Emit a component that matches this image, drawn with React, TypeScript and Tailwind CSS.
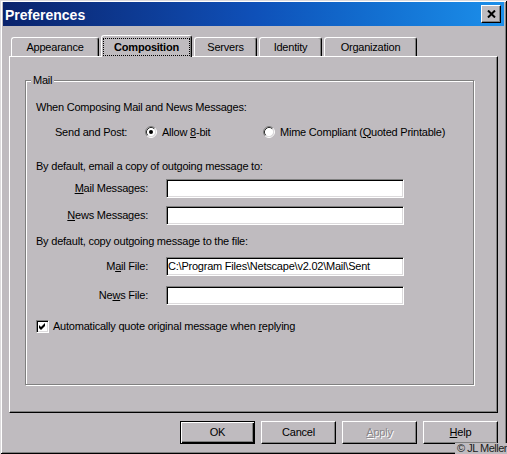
import React from 'react';

const tabs = [
  { label: 'Appearance', w: 'w-[88px]' },
  { label: 'Composition', w: 'w-[91px]', active: true },
  { label: 'Servers', w: 'w-[63px]' },
  { label: 'Identity', w: 'w-[63px]' },
  { label: 'Organization', w: 'w-[93px]' },
];

function Radio({ checked }: { checked?: boolean }) {
  return (
    <svg width="12" height="12" viewBox="0 0 12 12" className="shrink-0">
      <circle cx="6" cy="6" r="4.5" fill="#fff" />
      <path d="M2.11 9.89 A5.5 5.5 0 0 1 9.89 2.11" stroke="#808080" fill="none" />
      <path d="M9.89 2.11 A5.5 5.5 0 0 1 2.11 9.89" stroke="#fff" fill="none" />
      <path d="M2.82 9.18 A4.5 4.5 0 0 1 9.18 2.82" stroke="#303030" fill="none" />
      <path d="M9.18 2.82 A4.5 4.5 0 0 1 2.82 9.18" stroke="#dcdadc" fill="none" />
      {checked && <circle cx="6" cy="6" r="2" fill="#000" />}
    </svg>
  );
}

function Checkbox() {
  return (
    <span className="w-[13px] h-[13px] shrink-0 bg-white border border-t-[#808080] border-l-[#808080] border-b-white border-r-white shadow-[inset_1px_1px_0_#000,inset_-1px_-1px_0_#dcdadc] flex items-center justify-center">
      <svg width="9" height="9" viewBox="0 0 9 9">
        <path d="M1 3 L3 5 L7 1 L7 4 L3 8 L1 6 Z" fill="#000" />
      </svg>
    </span>
  );
}

function Field({ value }: { value?: string }) {
  return (
    <div className="ml-[18px] w-[238px] h-[19px] bg-white border border-t-[#808080] border-l-[#808080] border-b-white border-r-white shadow-[inset_1px_1px_0_#000,inset_-1px_-1px_0_#dcdadc] pl-[1px] flex items-center whitespace-nowrap overflow-hidden">
      {value}
    </div>
  );
}

export default function App() {
  return (
    <div className="w-[507px] h-[454px] relative flex flex-col bg-[#bfbbbf] pt-[2px] px-[3px] text-[11px] leading-[13px] tracking-[-0.22px] text-black font-['Liberation_Sans',Arial,sans-serif] shadow-[inset_1px_1px_0_#dcdadc,inset_-1px_-1px_0_#000,inset_2px_2px_0_#fff,inset_-2px_-2px_0_#808080]">
      {/* title bar */}
      <div className="h-[24px] shrink-0 flex items-center justify-between pl-[2px] pr-[3px] bg-linear-to-r from-[#0a236c] via-[#0f50b8] to-[#1c8fea]">
        <span className="text-white font-bold text-[14px] leading-[16px] tracking-normal mt-[1px]">Preferences</span>
        <span className="w-[20px] h-[18px] bg-[#bfbbbf] border border-t-white border-l-white border-r-black border-b-black shadow-[inset_-1px_-1px_0_#808080] flex items-center justify-center">
          <svg width="9" height="8" viewBox="0 0 9 8">
            <path d="M1 0.5 L8 7.5 M8 0.5 L1 7.5" stroke="#000" strokeWidth="2" />
          </svg>
        </span>
      </div>

      <div className="px-[6px] mt-[9px]">
        {/* tabs */}
        <div className="flex items-end gap-[2px] pl-[2px] h-[21px]">
          {tabs.map((t) =>
            t.active ? (
              <div
                key={t.label}
                className={`${t.w} h-[22px] -mb-px relative z-10 bg-[#bfbbbf] font-bold pt-[2px] flex items-center justify-center border-t border-l border-white border-r border-r-black shadow-[inset_-1px_0_0_#808080] rounded-t-[3px]`}
              >
                <span className="absolute left-[1px] right-[1px] top-[2px] bottom-[1px] border border-dotted border-black" />
                {t.label}
              </div>
            ) : (
              <div
                key={t.label}
                className={`${t.w} h-[19px] pt-[1px] flex items-center justify-center border-t border-l border-white border-r border-r-black shadow-[inset_-1px_0_0_#808080] rounded-t-[3px]`}
              >
                {t.label}
              </div>
            )
          )}
        </div>

        {/* tab panel */}
        <div className="h-[357px] border border-t-white border-l-white border-r-black border-b-black shadow-[inset_-1px_-1px_0_#808080]">
          <div className="relative ml-[15px] mt-[23px] w-[449px] h-[305px] border border-[#808080] shadow-[inset_1px_1px_0_#fff,1px_1px_0_#fff] pl-[10px] flex flex-col">
            <span className="absolute left-[5px] -top-[7px] px-[2px] bg-[#bfbbbf]">Mail</span>

            <div className="mt-[19px] h-[14px] flex items-center">When Composing Mail and News Messages:</div>

            <div className="mt-[11px] h-[14px] flex items-center ml-[19px]">
              <span className="w-[90px]">Send and Post:</span>
              <span className="w-[118px] flex items-center gap-[5px]">
                <Radio checked />
                <span>
                  Allow <u>8</u>-bit
                </span>
              </span>
              <span className="flex items-center gap-[5px]">
                <Radio />
                <span>
                  Mime Compliant (<u>Q</u>uoted Printable)
                </span>
              </span>
            </div>

            <div className="mt-[20px] h-[14px] flex items-center">By default, email a copy of outgoing message to:</div>

            <div className="mt-[6px] flex items-center">
              <span className="w-[112px] text-right">
                <u>M</u>ail Messages:
              </span>
              <Field />
            </div>
            <div className="mt-[8px] flex items-center">
              <span className="w-[112px] text-right">
                <u>N</u>ews Messages:
              </span>
              <Field />
            </div>

            <div className="mt-[9px] h-[14px] flex items-center">By default, copy outgoing message to the file:</div>

            <div className="mt-[9px] flex items-center">
              <span className="w-[112px] text-right">
                M<u>a</u>il File:
              </span>
              <Field value={'C:\\Program Files\\Netscape\\v2.02\\Mail\\Sent'} />
            </div>
            <div className="mt-[10px] flex items-center">
              <span className="w-[112px] text-right">
                Ne<u>w</u>s File:
              </span>
              <Field />
            </div>

            <div className="mt-[15px] h-[13px] flex items-center gap-[4px]">
              <Checkbox />
              <span>
                Automatically quote original message when <u>r</u>eplying
              </span>
            </div>
          </div>
        </div>

        {/* dialog buttons */}
        <div className="mt-[8px] flex justify-end gap-[6px]">
          <button className="w-[75px] h-[23px] border border-black shadow-[inset_1px_1px_0_#fff,inset_-1px_-1px_0_#000,inset_-2px_-2px_0_#808080]">
            OK
          </button>
          <button className="w-[75px] h-[23px] border border-t-white border-l-white border-r-black border-b-black shadow-[inset_-1px_-1px_0_#808080]">
            Cancel
          </button>
          <button className="w-[75px] h-[23px] border border-t-white border-l-white border-r-black border-b-black shadow-[inset_-1px_-1px_0_#808080] text-[#8a868a] [text-shadow:1px_1px_0_#fff]">
            <u>A</u>pply
          </button>
          <button className="w-[75px] h-[23px] border border-t-white border-l-white border-r-black border-b-black shadow-[inset_-1px_-1px_0_#808080]">
            <u>H</u>elp
          </button>
        </div>
      </div>

      <span className="absolute right-0 bottom-0 pl-[2px] bg-[#bfbbbf] text-[11px] leading-[11px] tracking-[-0.5px] text-[#202020]">
        © JL Meller
      </span>
    </div>
  );
}
